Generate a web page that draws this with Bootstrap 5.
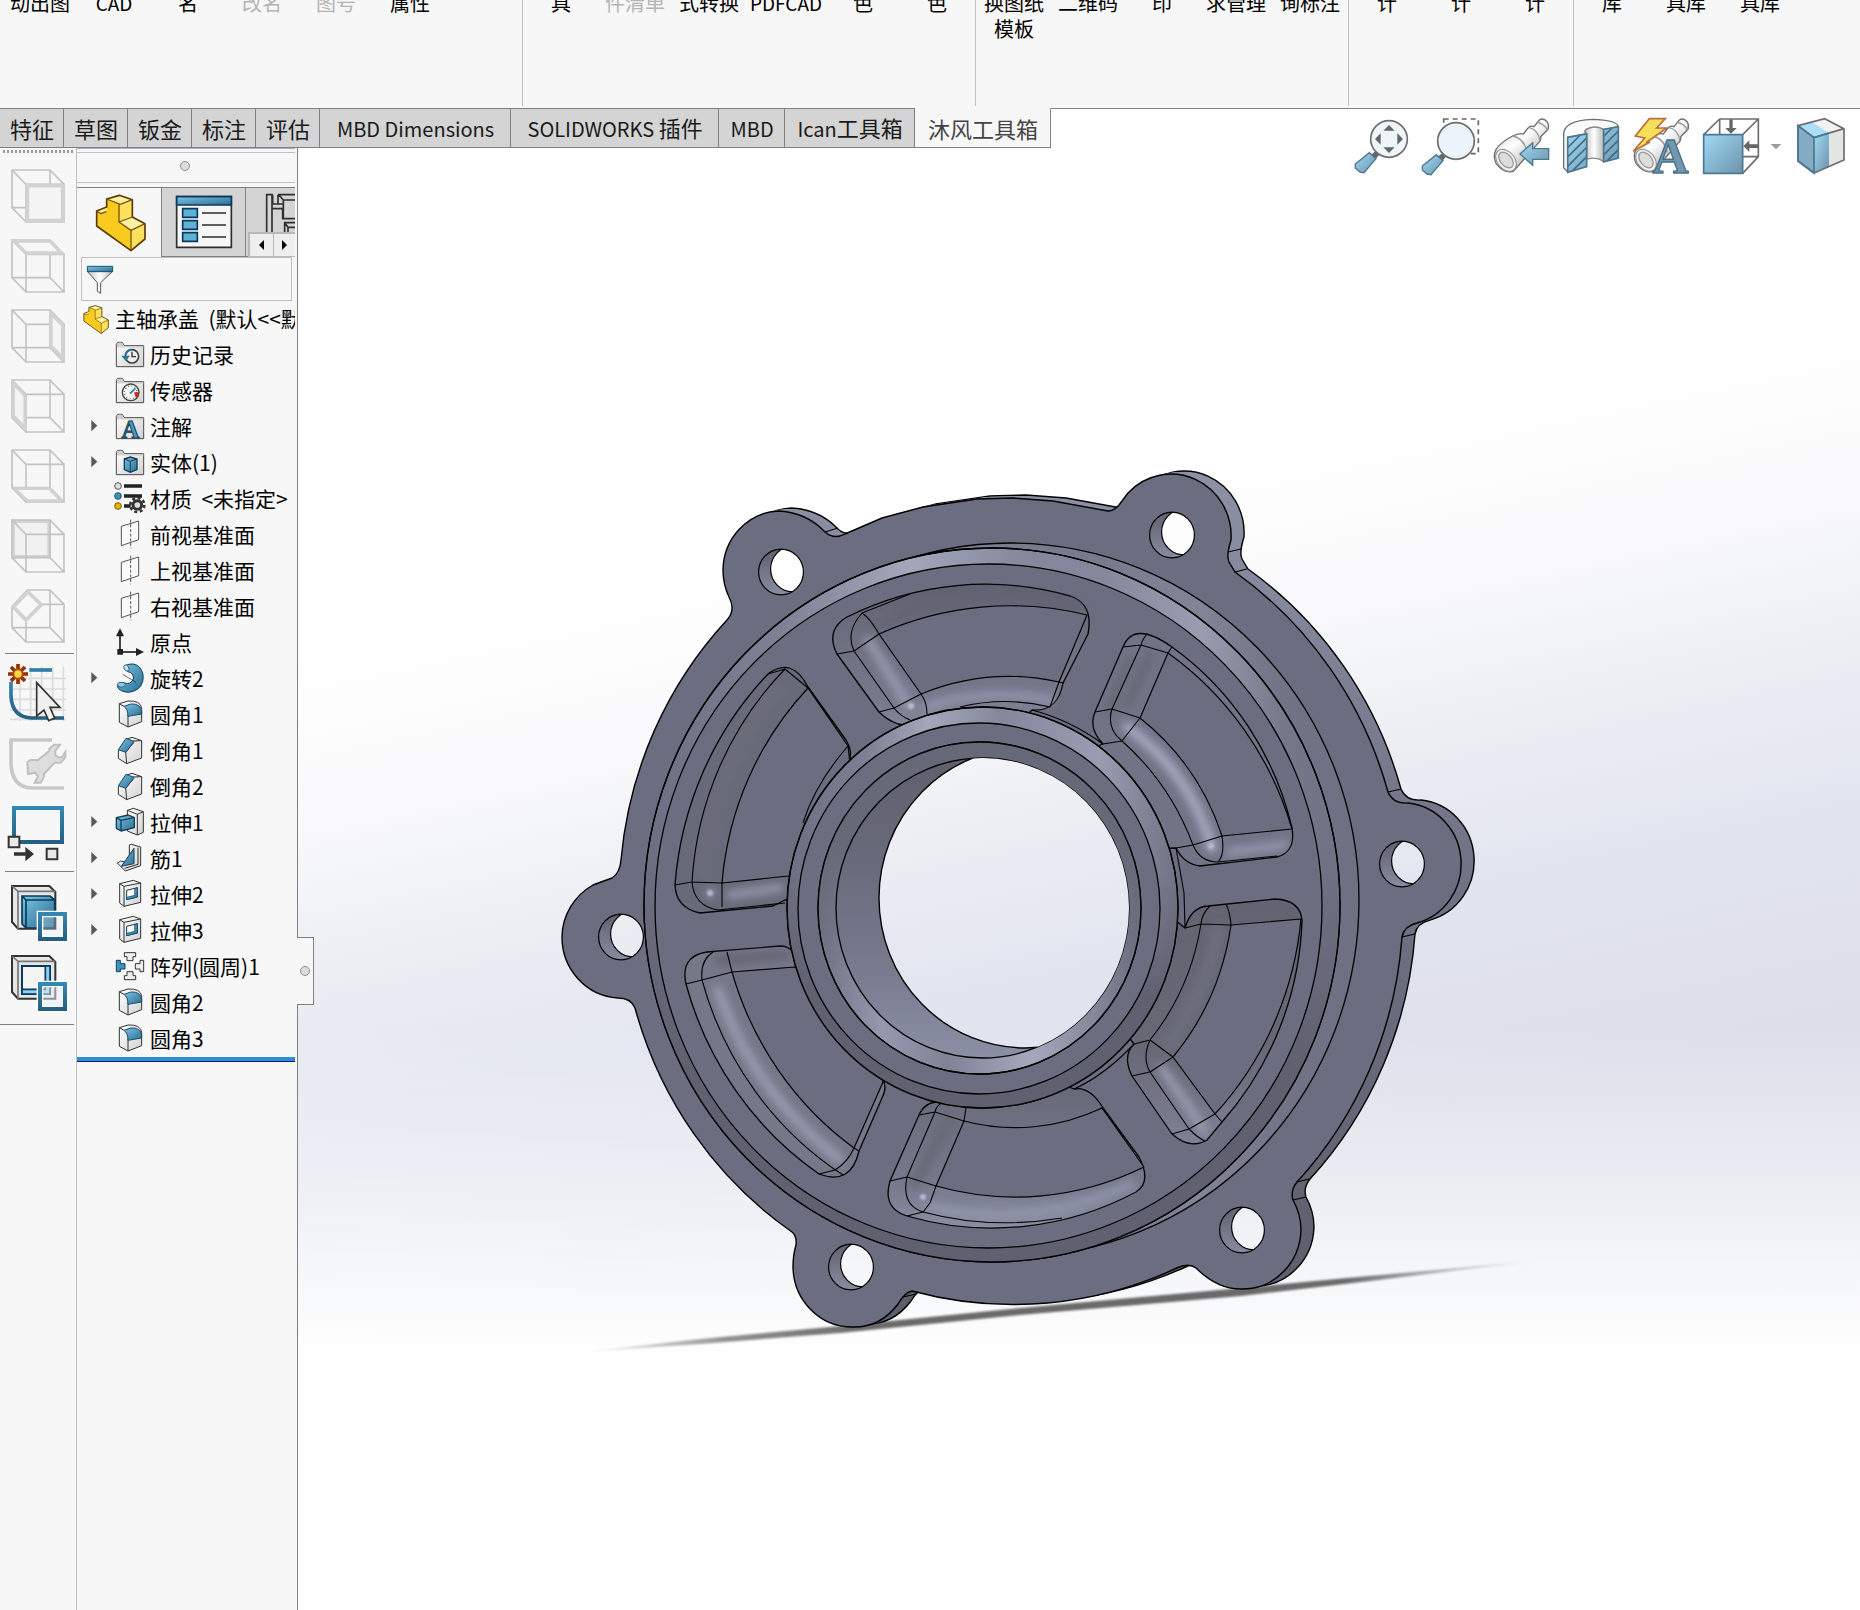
<!DOCTYPE html>
<html lang="zh-CN">
<head>
<meta charset="utf-8">
<meta name="viewport" content="width=device-width, initial-scale=1">
<title>SOLIDWORKS - 主轴承盖</title>
<link rel="stylesheet" href="https://cdn.jsdelivr.net/npm/bootstrap@5.3.0/dist/css/bootstrap.min.css">
<style>
  :root { --panel: #f7f7f7; --edge: #808080; --soft: #c0c0c0; --tab: #d4d4d4; }
  body { font-family: "Noto Sans CJK SC", sans-serif; color: #000; background: #fff; }
  button { font: inherit; color: inherit; background: none; border: 0; padding: 0; }
  svg { display: block; flex: none; }

  .ribbon { height: 108px; background: var(--panel); font-size: 20px; line-height: 26px; overflow: hidden; padding-left: 3px; }
  .cmd { width: 74px; align-self: flex-start; margin-top: -10px; text-align: center; white-space: nowrap; }
  .cmd-wide { width: 80px; }
  .cmd-latin { font-size: 19px; }
  .cmd:disabled { color: #b4b4b4; }
  .rule { width: 1px; height: 106px; margin: 0 1px; background: var(--soft); }
  .spare { width: 75px; }

  .cmtabs { background: #fff; font-size: 22px; line-height: 37px; }
  .cmtab { height: 40px; padding: 0 9px 0 10px; background: var(--tab); border: solid var(--edge); border-width: 1px 1px 1px 0; color: #1a1a1a; white-space: nowrap; }
  .cmtab span { font-size: 20px; }
  .cmtab-xl { width: 191px; } .cmtab-xxl { width: 208px; } .cmtab-m { width: 66px; } .cmtab-l { width: 130px; } .cmtab-on { width: 136px; }
  .cmtab-on { background: var(--panel); border-top-color: var(--panel); color: #444; }
  .cmline { border-top: 1px solid var(--edge); }

  .viewbar { width: 77px; background: var(--panel); border-right: 1px solid var(--soft); }
  .grip { height: 13px; padding: 2px 2px 0 3px; }
  .grip i { display: block; height: 3px; background: repeating-linear-gradient(90deg, #9a9a9a 0 2px, transparent 2px 4px); }
  .vb { display: block; height: 70px; width: 76px; }
  .split { border-top: 1px solid var(--edge); margin: 2px 2px 4px 5px; }
  .split-b { margin: 3px 2px 6px 5px; }
  .split-c { margin: 6px 2px 0 0; }

  .tree-pane { width: 221px; background: var(--panel); border-right: 1px solid var(--edge); position: relative; padding-right: 2px; }
  .pane-top { height: 39px; border-top: 1px solid #9db8c0; }
  .pane-grip { height: 31px; margin-top: 3px; border: solid var(--soft); border-width: 1px 0; padding: 0 3px 3px 0; }
  .dot { width: 10px; height: 10px; border-radius: 50%; background: #ddd; border: 1px solid #8c8c8c; }
  .ptabs { height: 70px; border-top: 1px solid var(--edge); overflow: hidden; position: relative; }
  .ptab { height: 69px; border-right: 1px solid var(--edge); flex: none; }
  .ptab-off { background: var(--tab); border-bottom: 1px solid var(--edge); }
  .pscroll { right: 0; bottom: 0; background: #eee; border: solid #b8b8b8; border-width: 2px 0 1px 2px; }
  .pscroll button { width: 23px; height: 22px; }
  .pscroll button + button { border-left: 1px solid #b8b8b8; width: 22px; }
  .find { height: 44px; margin: 0 3px 0 4px; border: 1px solid var(--soft); }
  .find input { min-width: 0; flex: 1; border: 0; background: none; font-size: 20px; outline: 0; }
  .tree { font-size: 21px; line-height: 36px; white-space: nowrap; overflow: hidden; margin: 0; }
  .tree li { height: 36px; display: flex; }
  .tree span { margin-top: -1px; }
  .root-node { padding-left: 5px; }
  .root-node span { margin-left: 5px; }
  .leaf { padding-left: 37px; }
  .leaf.has-kids { padding-left: 7px; }
  .leaf span { margin-left: 4px; }
  .twist { width: 30px; height: 36px; flex: none; }
  .rollback { height: 5px; background: #2f8fcb; border-bottom: 1px solid #15158a; }
  .collapse-tab { left: 220px; top: 789px; width: 17px; height: 68px; background: var(--panel); border: 1px solid var(--edge); border-left: 0; }

  .scene { background: linear-gradient(to bottom, rgba(255,255,255,0) 60%, rgba(255,255,255,.4) 70%, #fefefe 82%), linear-gradient(168deg, #fff 28%, #f9f9fb 38%, #eceef3 46%, #e2e6f0 54%, #dcdfea 67%); }
  .scene > svg { position: absolute; inset: 0; width: 100%; height: 100%; }
  .hud { right: 4px; top: 112px; z-index: 3; }
</style>
</head>
<body>
<!-- shared icon parts -->
<svg width="0" height="0" class="position-absolute" aria-hidden="true">
  <defs>
    <linearGradient id="bl" x1="0" y1="0" x2="1" y2="1"><stop offset="0" stop-color="#9fdaf5"/><stop offset="1" stop-color="#6d93aa"/></linearGradient>
    <linearGradient id="bd" x1="0" y1="0" x2="1" y2="1"><stop offset="0" stop-color="#7cc4e4"/><stop offset="1" stop-color="#2a6c90"/></linearGradient>
    <linearGradient id="st" x1="0" y1="0" x2="0" y2="1"><stop offset="0" stop-color="#3388b2"/><stop offset="1" stop-color="#265f80"/></linearGradient>
    <linearGradient id="wh" x1="0" y1="0" x2="1" y2="1"><stop offset="0" stop-color="#fff"/><stop offset="1" stop-color="#d2d2d2"/></linearGradient>
    <linearGradient id="tube" gradientUnits="userSpaceOnUse" x1="520" y1="400" x2="570" y2="460"><stop offset="0" stop-color="#ececec"/><stop offset=".35" stop-color="#fff"/><stop offset="1" stop-color="#cfcfcf"/></linearGradient>
    <linearGradient id="gy" x1="0" y1="0" x2="1" y2="0"><stop offset="0" stop-color="#c4c4c4"/><stop offset=".5" stop-color="#fff"/><stop offset="1" stop-color="#b8b8b8"/></linearGradient>
    <clipPath id="hatch"><path d="M683 412l57-10v98l-57 17zM791 388l44-8v94l-44 12z"/></clipPath>
    <g id="wire" fill="none" stroke="#c3c3c3" stroke-width="5">
      <path d="M36 90H150V203H36zM78 133H192V246H78zM36 90l42 43M150 90l42 43M36 203l42 43M150 203l42 43"/>
    </g>
    <g id="folder"><path d="M7 89V22l4-6h14l6 10h58v63z" fill="url(#wh)" stroke="#4a4a4a" stroke-width="3"/><path d="M9 31V22l4-5h11l6 11h58v4z" fill="#cfcfcf"/></g>
    <g id="plane" fill="none" stroke="#333" stroke-width="2.5"><path d="M22 28L74 12V68L22 86z" fill="#fafafa"/><path d="M50 8V94" stroke-dasharray="9 5"/></g>
    <g id="fillet" stroke="#333" stroke-width="3" stroke-linejoin="round"><path d="M16 20l26-8q38-2 41 22v40L42 90 16 76z" fill="url(#wh)"/><path d="M42 52V90M16 20l14 8" fill="none"/><path d="M30 28l20-7q30-2 33 22v8L42 58q0-22-12-30z" fill="url(#bd)" stroke="#174f6c"/></g>
    <g id="chamfer" stroke="#333" stroke-width="3" stroke-linejoin="round"><path d="M13 54L38 18l16-5 29 10v52L38 92 13 76z" fill="url(#wh)"/><path d="M35 57L38 92M35 57L60 28M58 24l25-1" fill="none"/><path d="M13 50L36 16l24 9L36 58z" fill="url(#bd)" stroke="#174f6c"/></g>
    <g id="cut" stroke="#333" stroke-width="3" stroke-linejoin="round"><path d="M17 20L58 10l22 8v58L30 88 17 78z" fill="url(#wh)"/><path d="M30 28L80 18M30 28V88M17 20l13 8" fill="none"/><path d="M38 40l32-8v28l-32 8z" fill="#fff" stroke="#0b3e5c"/><path d="M62 35l8-3v28l-32 8v-7l24-6z" fill="url(#bd)" stroke="#0b3e5c" stroke-width="2"/></g>
    <g id="brick" stroke-linejoin="round" stroke-width="4"><path d="M290 210l30-12v-24l38-11 39 13v52l38 20v46l-42 35-103-74z" fill="#f9cb1f"/><path d="M290 210l30-10v12l-18 8zM320 174l38-11 39 13-36 14zM357 243l36-16 42 21-42 20z" fill="#fdf0a0"/><path d="M361 190l36-14v52l-40 15zM393 268l42-20v46l-42 35z" fill="#fbe25c"/><path d="M290 210l30-12v-24l38-11 39 13v52l38 20v46l-42 35-103-74z" fill="none" stroke="#5b3905" stroke-width="5"/><path d="M361 190l-41-16M361 190l36-14M357 190v53l36 25 42-20M393 268v60M357 243l40-15M290 210l12 8 18-6" fill="none" stroke="#7a5310"/></g>
    <g id="tri"><path d="M22 45l18 17-18 17z" fill="#595959"/></g>
    <g id="binoc" stroke="#6e6e6e" stroke-width="4"><path d="M468 449Q480 428 518 408 540 398 550 402L566 382Q576 376 582 380L598 360Q610 352 622 366 628 376 624 388L602 410Q604 422 596 428L566 462 520 514Q492 522 468 490 458 468 468 449z" fill="url(#tube)"/><path d="M518 408q36 8 44 50M566 382q28 6 34 40M590 366q24 6 32 24" fill="none" stroke="#999"/><ellipse cx="498" cy="481" rx="26" ry="37" transform="rotate(-40 498 481)" fill="#f2f2f2" stroke="#888" stroke-width="3"/><ellipse cx="498" cy="480" rx="17" ry="27" transform="rotate(-40 498 480)" fill="#dcdcdc" stroke="#999"/></g>
  </defs>
</svg>

<div class="d-flex flex-column min-vh-100 position-relative overflow-hidden">
  <header class="ribbon d-flex">
    <button class="cmd">动出图</button><button class="cmd cmd-latin">CAD</button><button class="cmd">名</button><button class="cmd" disabled>改名</button><button class="cmd" disabled>图号</button><button class="cmd">属性</button><div class="spare"></div>
    <div class="rule ms-0"></div>
    <button class="cmd">具</button><button class="cmd" disabled>件清单</button><button class="cmd">式转换</button><button class="cmd cmd-wide cmd-latin">PDFCAD</button><button class="cmd">色</button><button class="cmd">色</button>
    <div class="rule"></div>
    <button class="cmd">换图纸<br>模板</button><button class="cmd">二维码</button><button class="cmd">印</button><button class="cmd">求管理</button><button class="cmd">询标注</button>
    <div class="rule"></div>
    <button class="cmd">计</button><button class="cmd">计</button><button class="cmd">计</button>
    <div class="rule"></div>
    <button class="cmd">库</button><button class="cmd">具库</button><button class="cmd">具库</button>
  </header>

  <nav class="cmtabs d-flex">
    <button class="cmtab">特征</button><button class="cmtab">草图</button><button class="cmtab">钣金</button><button class="cmtab">标注</button><button class="cmtab">评估</button><button class="cmtab cmtab-xl"><span>MBD Dimensions</span></button><button class="cmtab cmtab-xxl"><span>SOLIDWORKS </span>插件</button><button class="cmtab cmtab-m"><span>MBD</span></button><button class="cmtab cmtab-l"><span>Ican</span>工具箱</button><button class="cmtab cmtab-on">沐风工具箱</button>
    <div class="cmline flex-grow-1"></div>
  </nav>

  <div class="hud d-flex align-items-center position-absolute">
    <button aria-label="整屏显示全图"><svg width="70" height="70" viewBox="18 336 210 210"><path d="M92 466l18-16 12 10-18 20z" fill="#666"/><path d="M46 492l42-34 20 18-36 42-12-2-14-12z" fill="url(#bl)" stroke="#4d7790" stroke-width="4"/><circle cx="147" cy="417" r="55" fill="#eef6fa" stroke="#6e6e6e" stroke-width="5"/><path d="M147 375l17 17h-34zM147 459l17-17h-34zM105 417l17-17v34zM189 417l-17-17v34z" fill="#666"/></svg></button>
    <button aria-label="局部放大"><svg width="70" height="70" viewBox="228 336 210 210"><path d="M311 357H415V461H311z" fill="none" stroke="#666" stroke-width="5" stroke-dasharray="15 12"/><path d="M292 472l18-16 12 10-18 20z" fill="#666"/><path d="M247 498l42-34 20 18-36 42-12-2-14-12z" fill="url(#bl)" stroke="#4d7790" stroke-width="4"/><circle cx="348" cy="423" r="55" fill="#eaf4fa" stroke="#6e6e6e" stroke-width="5"/></svg></button>
    <button aria-label="上一视图"><svg width="70" height="70" viewBox="438 336 210 210"><use href="#binoc"/><path d="M540 462l38-34v18h48v32h-48v18z" fill="url(#bl)" stroke="#4d7790" stroke-width="4"/></svg></button>
    <button aria-label="剖面视图"><svg width="70" height="70" viewBox="648 336 210 210"><path d="M683 515l-12-12V402q0-40 86-44 74 2 78 22l-44 10-4-2q-22-12-48 0l-5 14-51 10z" fill="#fafafa" stroke="#6e6e6e" stroke-width="4"/><path d="M734 392q26-20 57-4v96q-24-16-51-6V402z" fill="url(#gy)" stroke="#888" stroke-width="4"/><path d="M683 412l57-10v98l-57 17zM791 388l44-8v94l-44 12z" fill="url(#bl)"/><g clip-path="url(#hatch)" stroke="#3f6d88" stroke-width="5"><path d="M680 446l44-44M680 474l64-64M680 502l64-64M692 518l52-52M786 414l34-34M786 442l54-54M786 470l54-54M796 488l44-44"/></g><path d="M683 412l57-10v98l-57 17zM791 388l44-8v94l-44 12z" fill="none" stroke="#4d7790" stroke-width="5"/></svg></button>
    <button aria-label="动态注解视图"><svg width="70" height="70" viewBox="858 336 210 210"><use href="#binoc" x="420"/><path d="M928 356h48l-26 28h30l-62 44 12-2-50 28 34-40-28-6z" fill="#f8df5a" stroke="#b96f3f" stroke-width="5"/><text x="992" y="519" text-anchor="middle" font-family="Liberation Serif, serif" font-weight="700" font-size="150" fill="#7398ae" stroke="#456f8a" stroke-width="4">A</text></svg></button>
    <button aria-label="视图定向"><svg width="70" height="70" viewBox="1068 336 210 210"><path d="M1091 404l48-47h116v113l-47 50M1208 404l47-47M1139 357v47M1208 470h47" fill="none" stroke="#6e6e6e" stroke-width="5"/><path d="M1091 404H1208V520H1091z" fill="url(#bl)" stroke="#4d7790" stroke-width="5"/><path d="M1168 358h10v26h12l-17 17-17-17h12zM1256 433v11h-28v12l-18-18 18-17v12z" fill="#666"/></svg></button>
    <button aria-label="更多视图"><svg width="20" height="70" viewBox="1278 336 60 210"><path d="M1292 432h32l-16 16z" fill="#9c9c9c"/></svg></button>
    <button aria-label="显示样式"><svg width="70" height="70" viewBox="1338 336 210 210"><path d="M1374 377l80-21 58 30-90 27z" fill="#f2f2f2"/><path d="M1374 377l42-10 52 33-46 13z" fill="#a9e0f8"/><path d="M1374 377l48 36v106l-48-36z" fill="#86abc4"/><path d="M1422 413l90-27v94l-90 39z" fill="#e4e6e6"/><path d="M1422 413l45-14v101l-45 19z" fill="url(#bl)"/><path d="M1374 377l80-21 58 30v94l-90 39-48-36zM1374 377l48 36 90-27" fill="none" stroke="#6e6e6e" stroke-width="5"/><path d="M1422 519l-48-36V377l48 36zl0-106 45-14" fill="none" stroke="#4d7790" stroke-width="5"/></svg></button>
  </div>

  <main class="d-flex flex-grow-1">
    <aside class="viewbar flex-shrink-0">
      <div class="grip"><i></i></div>
      <button class="vb" aria-label="前视"><svg width="76" height="70" viewBox="0 63 228 210"><use href="#wire"/><path d="M82 137H188V242H82z" fill="#f4f4f4" stroke="#d2d2d2" stroke-width="11"/></svg></button>
      <button class="vb" aria-label="上视"><svg width="76" height="70" viewBox="0 63 228 210"><use href="#wire"/><path d="M42 93H150l34 36H78z" fill="#f7f7f7" stroke="#d2d2d2" stroke-width="10"/></svg></button>
      <button class="vb" aria-label="右视"><svg width="76" height="70" viewBox="0 63 228 210"><use href="#wire"/><path d="M153 100l35 36v98l-35-36z" fill="#f4f4f4" stroke="#d2d2d2" stroke-width="10"/></svg></button>
      <button class="vb" aria-label="左视"><svg width="76" height="70" viewBox="0 63 228 210"><use href="#wire"/><path d="M40 100l35 36v98l-35-36z" fill="#f4f4f4" stroke="#d2d2d2" stroke-width="10"/></svg></button>
      <button class="vb" aria-label="下视"><svg width="76" height="70" viewBox="0 63 228 210"><use href="#wire"/><path d="M46 206H148l34 36H82z" fill="#f7f7f7" stroke="#d2d2d2" stroke-width="8"/></svg></button>
      <button class="vb" aria-label="后视"><svg width="76" height="70" viewBox="0 63 228 210"><path d="M40 94H147V200H40z" fill="#f1f1f1" stroke="#d2d2d2" stroke-width="10"/><use href="#wire"/></svg></button>
      <button class="vb" aria-label="等轴测"><svg width="76" height="70" viewBox="0 63 228 210"><path d="M36 140L82 90h68l42 43V246H78l-42-43zM150 90V203l42 43M36 203H150M78 246V185M128 133h64" fill="none" stroke="#c3c3c3" stroke-width="5"/><path d="M84 96l40 38-46 46-38-40z" fill="#f8f8f8" stroke="#d2d2d2" stroke-width="11"/></svg></button>
      <div class="split"></div>
      <button class="vb" aria-label="草图绘制"><svg width="76" height="70" viewBox="0 594 228 210"><path d="M60 620V784M92 620V784M125 620V784M158 620V784M190 620V784M30 655H198M30 687H198M30 718H198M30 750H198M30 778H198" stroke="#dcdcdc" stroke-width="5"/><path d="M33 665v45q4 62 62 64h97" fill="none" stroke="url(#st)" stroke-width="11"/><path d="M88 630h68" stroke="#2f7fa6" stroke-width="11"/><path d="M54 612V672M24 642H84M33 621L75 663M75 621L33 663" stroke="#962f04" stroke-width="11"/><circle cx="54" cy="642" r="14" fill="#ffd83b" stroke="#b04a10" stroke-width="6"/><path d="M110 668v100l22-18 14 32 18-8-14-32h30z" fill="#f0f0f0" stroke="#333" stroke-width="5"/></svg></button>
      <button class="vb" aria-label="修复草图"><svg width="76" height="70" viewBox="0 804 228 210"><path d="M156 840H33v74q4 68 62 70h97" fill="none" stroke="#c8c8c8" stroke-width="11"/><path d="M82 906L92 900H114L148 872V866L162 854H180L166 872V886L174 892H186L196 876V892L182 908H164L132 942V950L122 968H104L114 950 106 938 84 942z" fill="#ddd" stroke="#c0c0c0" stroke-width="6"/></svg></button>
      <button class="vb" aria-label="移动实体"><svg width="76" height="70" viewBox="0 54 228 210"><path d="M42 84H186V186H42z" fill="none" stroke="url(#st)" stroke-width="12"/><path d="M26 170h32v32H26zM140 206h32v32h-32z" fill="#e8e8e8" stroke="#333" stroke-width="6"/><path d="M42 217h34v-16l26 21-26 22v-17H42z" fill="#333"/></svg></button>
      <div class="split split-b"></div>
      <button class="vb" aria-label="凸台"><svg width="76" height="70" viewBox="0 294 228 210"><path d="M36 318H148l18 18V446H54l-18-20z" fill="#e6e6e6" stroke="#333" stroke-width="6"/><path d="M36 318l18 16v112M54 334h112" fill="none" stroke="#777" stroke-width="5"/><path d="M66 348h84l14 12v84H78l-12-12z" fill="url(#bd)" stroke="#073a5c" stroke-width="5"/><path d="M66 348l12 12h86M78 360v84" fill="none" stroke="#073a5c" stroke-width="5"/><path d="M120 402h75v75h-75z" fill="none" stroke="#fff" stroke-width="20"/><path d="M120 402h75v75h-75z" fill="#e8f0f4" fill-opacity=".3" stroke="url(#st)" stroke-width="12"/></svg></button>
      <button class="vb" aria-label="切除"><svg width="76" height="70" viewBox="0 504 228 210"><path d="M36 528H148l18 18V656H54l-18-20z" fill="#e6e6e6" stroke="#333" stroke-width="6"/><path d="M36 528l18 16v112M54 544h112" fill="none" stroke="#777" stroke-width="5"/><path d="M66 558h84v84H66z" fill="#f4f4f4" stroke="#073a5c" stroke-width="6"/><path d="M136 558h14v84H66v-14h70z" fill="#8fd0f0" stroke="#073a5c" stroke-width="5"/><path d="M120 612h75v75h-75z" fill="none" stroke="#fff" stroke-width="20"/><path d="M120 612h75v75h-75z" fill="#e8f0f4" fill-opacity=".5" stroke="url(#st)" stroke-width="12"/></svg></button>
      <div class="split split-c"></div>
    </aside>

    <aside class="tree-pane flex-shrink-0">
      <div class="pane-top overflow-hidden"><div class="pane-grip d-flex align-items-center justify-content-center"><div class="dot"></div></div></div>
      <div class="ptabs d-flex">
        <button class="ptab" aria-label="特征管理"><svg width="84" height="68" viewBox="231 144 252 204"><use href="#brick"/></svg></button>
        <button class="ptab ptab-off" aria-label="属性管理"><svg width="83" height="68" viewBox="486 144 249 204"><path d="M530 170H694V322H530z" fill="#f6f6f6" stroke="#2e2e2e" stroke-width="5"/><path d="M530 170H694V195H530z" fill="url(#bd)" stroke="#073a5c" stroke-width="5"/><g fill="#5fb2d6" stroke="#073a5c" stroke-width="5"><path d="M548 206h44v26h-44zM548 242h44v26h-44zM548 278h44v26h-44z"/></g><path d="M606 219h72M606 255h72M606 291h72" stroke="#2e2e2e" stroke-width="5"/></svg></button>
        <button class="ptab ptab-off" aria-label="配置管理"><svg width="60" height="68" viewBox="738 144 180 204"><g fill="none" stroke="#2e2e2e" stroke-width="5"><path d="M800 280V164h16v116M818 192h16M818 206h16M834 164h60M818 164v28M834 164v28l14 0M834 206h14v30h50M850 180h48M836 164l14 16v56M854 280v-32h40M864 280v-18h30M854 248l10 14"/></g></svg></button>
        <div class="pscroll d-flex position-absolute"><button aria-label="向左"><svg width="23" height="22" viewBox="0 0 23 22"><path d="M14 6v10l-5-5z"/></svg></button><button aria-label="向右"><svg width="21" height="22" viewBox="0 0 21 22"><path d="M8 6v10l5-5z"/></svg></button></div>
      </div>
      <div class="find d-flex">
        <label for="treeFilter"><svg width="36" height="42" viewBox="246 354 108 126"><path d="M262 394l30 34v26l10 6v-32l36-34z" fill="url(#gy)" stroke="#555" stroke-width="3"/><path d="M262 379H338V395H262z" fill="url(#bd)" stroke="#19526f" stroke-width="3"/></svg></label>
        <input id="treeFilter" type="text" aria-label="过滤">
      </div>
      <ul class="tree list-unstyled">
        <li class="root-node"><svg width="28" height="36" viewBox="279 136 166 213"><use href="#brick"/></svg><span>主轴承盖&nbsp; (默认&lt;&lt;默认&gt;_显示状态 1&gt;)</span></li>
        <li class="leaf"><svg width="32" height="36" viewBox="0 0 96 108"><use href="#folder"/><circle cx="54" cy="58" r="20" fill="#eee" stroke="#444" stroke-width="5"/><path d="M54 44v15h12" fill="none" stroke="#333" stroke-width="4"/><path d="M22 56h26L35 72z" fill="#2a7599"/><path d="M34 54q4-16 18-16" fill="none" stroke="#2a7599" stroke-width="6"/></svg><span>历史记录</span></li>
        <li class="leaf"><svg width="32" height="36" viewBox="0 0 96 108"><use href="#folder"/><circle cx="50" cy="58" r="25" fill="#f6f6f6" stroke="#444" stroke-width="4"/><circle cx="50" cy="58" r="19" fill="none" stroke="#333" stroke-width="4" stroke-dasharray="2 8"/><path d="M48 62l16-16" stroke="#2f82a8" stroke-width="6"/><path d="M60 58h14q0 12-8 18z" fill="#d3270f"/></svg><span>传感器</span></li>
        <li class="leaf has-kids"><button class="twist" aria-label="展开"><svg width="25" height="36" viewBox="0 0 75 108"><use href="#tri" y="-12"/></svg></button><svg width="32" height="36" viewBox="0 0 96 108"><use href="#folder"/><text x="49" y="87" text-anchor="middle" font-family="Liberation Serif, serif" font-weight="700" font-size="74" fill="#4b9cc2" stroke="#123f58" stroke-width="3">A</text></svg><span>注解</span></li>
        <li class="leaf has-kids"><button class="twist" aria-label="展开"><svg width="25" height="36" viewBox="0 0 75 108"><use href="#tri" y="-12"/></svg></button><svg width="32" height="36" viewBox="0 0 96 108"><use href="#folder"/><path d="M31 42l18-6 20 6v32l-20 8-18-8z" fill="url(#bd)" stroke="#123f58" stroke-width="4"/><path d="M31 42l18 7 20-7M49 49v32" fill="none" stroke="#123f58" stroke-width="3"/></svg><span>实体(1)</span></li>
        <li class="leaf"><svg width="32" height="36" viewBox="0 0 96 108"><circle cx="12" cy="15" r="10" fill="#ddd" stroke="#555" stroke-width="3"/><circle cx="12" cy="45" r="10" fill="#3f92bb" stroke="#1d516c" stroke-width="3"/><circle cx="12" cy="75" r="10" fill="#e2b515" stroke="#7c5b00" stroke-width="3"/><path d="M30 15h54M30 45h54M30 75h20" stroke="#222" stroke-width="11"/><circle cx="70" cy="72" r="21" fill="none" stroke="#333" stroke-width="8" stroke-dasharray="9 7.5"/><circle cx="70" cy="72" r="13" fill="#ddd" stroke="#333" stroke-width="9"/></svg><span>材质&nbsp; &lt;未指定&gt;</span></li>
        <li class="leaf"><svg width="32" height="36" viewBox="0 0 96 108"><use href="#plane"/></svg><span>前视基准面</span></li>
        <li class="leaf"><svg width="32" height="36" viewBox="0 0 96 108"><use href="#plane"/></svg><span>上视基准面</span></li>
        <li class="leaf"><svg width="32" height="36" viewBox="0 0 96 108"><use href="#plane"/></svg><span>右视基准面</span></li>
        <li class="leaf"><svg width="32" height="36" viewBox="0 0 96 108"><path d="M18 30V81H70" fill="none" stroke="#444" stroke-width="6"/><path d="M18 10l12 24H6zM90 81L66 69v24zM10 72h17v17H10z" fill="#222"/></svg><span>原点</span></li>
        <li class="leaf has-kids"><button class="twist" aria-label="展开"><svg width="25" height="36" viewBox="0 0 75 108"><use href="#tri" y="-12"/></svg></button><svg width="32" height="36" viewBox="0 0 96 108"><path d="M32 14Q60 2 76 18 92 36 86 62 78 90 44 94 12 92 10 74 16 60 32 66 50 72 58 54 60 36 42 32 28 26 32 14z" fill="url(#bd)" stroke="#123f58" stroke-width="3"/><ellipse cx="37" cy="21" rx="7" ry="10" fill="#bfe4f5" stroke="#123f58" stroke-width="2" transform="rotate(-30 37 21)"/><ellipse cx="22" cy="71" rx="12" ry="7" fill="#8ccbe8" stroke="#123f58" stroke-width="2"/><path d="M26 40l40 24" stroke="#222" stroke-width="2"/></svg><span>旋转2</span></li>
        <li class="leaf"><svg width="32" height="36" viewBox="0 0 96 108"><use href="#fillet"/></svg><span>圆角1</span></li>
        <li class="leaf"><svg width="32" height="36" viewBox="0 0 96 108"><use href="#chamfer"/></svg><span>倒角1</span></li>
        <li class="leaf"><svg width="32" height="36" viewBox="0 0 96 108"><use href="#chamfer"/></svg><span>倒角2</span></li>
        <li class="leaf has-kids"><button class="twist" aria-label="展开"><svg width="25" height="36" viewBox="0 0 75 108"><use href="#tri" y="-12"/></svg></button><svg width="32" height="36" viewBox="0 0 96 108"><g stroke="#333" stroke-width="3" stroke-linejoin="round"><path d="M40 16l18-6 30 10v62l-18 8-30-12z" fill="url(#wh)"/><path d="M40 16l30 12v62M70 28l18-8" fill="none"/></g><g stroke="#123f58" stroke-width="4" stroke-linejoin="round"><path d="M7 38l36-8 18 8v30l-40 10-14-8z" fill="url(#bd)"/><path d="M7 38l14 8 40-8M21 46v32" fill="none"/></g></svg><span>拉伸1</span></li>
        <li class="leaf has-kids"><button class="twist" aria-label="展开"><svg width="25" height="36" viewBox="0 0 75 108"><use href="#tri" y="-12"/></svg></button><svg width="32" height="36" viewBox="0 0 96 108"><g stroke="#333" stroke-width="3" stroke-linejoin="round"><path d="M46 12l6-2 28 8v56L34 90 10 66l10-6 26 6z" fill="url(#wh)"/><path d="M72 20v50L32 82" fill="none"/></g><path d="M60 22v46l-38 8z" fill="url(#bd)" stroke="#123f58" stroke-width="3"/></svg><span>筋1</span></li>
        <li class="leaf has-kids"><button class="twist" aria-label="展开"><svg width="25" height="36" viewBox="0 0 75 108"><use href="#tri" y="-12"/></svg></button><svg width="32" height="36" viewBox="0 0 96 108"><use href="#cut"/></svg><span>拉伸2</span></li>
        <li class="leaf has-kids"><button class="twist" aria-label="展开"><svg width="25" height="36" viewBox="0 0 75 108"><use href="#tri" y="-12"/></svg></button><svg width="32" height="36" viewBox="0 0 96 108"><use href="#cut"/></svg><span>拉伸3</span></li>
        <li class="leaf"><svg width="32" height="36" viewBox="0 0 96 108"><g fill="#eee" stroke="#333" stroke-width="3"><path d="M31 11h34v12h-8v12H39V23h-8zM31 92h34V80h-8V68H39v12h-8zM89 34v34H78v-8H64V44h14V34z"/><path d="M7 34v34h12v-8h14V44H19V34z" fill="#3f92bb" stroke="#123f58"/></g></svg><span>阵列(圆周)1</span></li>
        <li class="leaf"><svg width="32" height="36" viewBox="0 0 96 108"><use href="#fillet"/></svg><span>圆角2</span></li>
        <li class="leaf"><svg width="32" height="36" viewBox="0 0 96 108"><use href="#fillet"/></svg><span>圆角3</span></li>
      </ul>
      <div class="rollback"></div>
      <button class="collapse-tab position-absolute d-flex align-items-center justify-content-center z-1" aria-label="收起面板"><span class="dot d-block"></span></button>
    </aside>

    <section class="scene flex-grow-1 position-relative overflow-hidden">
      <svg viewBox="298 148 1562 1462" preserveAspectRatio="xMidYMid slice" role="img" aria-label="主轴承盖三维模型">
        <defs>
          <linearGradient id="side" gradientUnits="userSpaceOnUse" x1="0" y1="470" x2="0" y2="1330"><stop offset="0" stop-color="#8e92a6"/><stop offset=".35" stop-color="#767a8c"/><stop offset=".6" stop-color="#6a6d7e"/><stop offset="1" stop-color="#5b5d6a"/></linearGradient>
          <linearGradient id="rim" gradientUnits="userSpaceOnUse" x1="644" y1="0" x2="1340" y2="0"><stop offset="0" stop-color="#6c6f82"/><stop offset=".2" stop-color="#7f8296"/><stop offset=".38" stop-color="#a4a7bb"/><stop offset=".55" stop-color="#84889c"/><stop offset=".66" stop-color="#84889c"/><stop offset=".8" stop-color="#9a9db1"/><stop offset=".92" stop-color="#757889"/><stop offset="1" stop-color="#6f7284"/></linearGradient>
          <linearGradient id="rim2" gradientUnits="userSpaceOnUse" x1="787" y1="0" x2="1178" y2="0"><stop offset="0" stop-color="#6c6f82"/><stop offset=".2" stop-color="#7d8094"/><stop offset=".36" stop-color="#a4a7bb"/><stop offset=".55" stop-color="#84889c"/><stop offset=".8" stop-color="#9a9db1"/><stop offset="1" stop-color="#6f7284"/></linearGradient>
          <linearGradient id="low" x1="0" y1="0" x2="0" y2="1"><stop offset=".42" stop-color="#5f6171" stop-opacity="0"/><stop offset=".72" stop-color="#5f6171"/></linearGradient>
          <linearGradient id="cone" gradientUnits="userSpaceOnUse" x1="818" y1="0" x2="1141" y2="0"><stop offset="0" stop-color="#6f7284"/><stop offset=".2" stop-color="#9699ad"/><stop offset=".4" stop-color="#7f8396"/><stop offset=".66" stop-color="#a5a9bd"/><stop offset="1" stop-color="#6c6f80"/></linearGradient>
          <linearGradient id="high" x1="0" y1="0" x2="0" y2="1"><stop offset=".3" stop-color="#666978"/><stop offset=".7" stop-color="#666978" stop-opacity="0"/></linearGradient>
          <linearGradient id="bore" gradientUnits="userSpaceOnUse" x1="930" y1="770" x2="930" y2="1055"><stop offset="0" stop-color="#5f616f"/><stop offset=".35" stop-color="#696c7c"/><stop offset=".7" stop-color="#787b8e"/><stop offset="1" stop-color="#8b8fa4"/></linearGradient>
          <linearGradient id="hol" x1="0" y1="0" x2="0" y2="1"><stop offset="0" stop-color="#5f616f"/><stop offset="1" stop-color="#888ca0"/></linearGradient>
          <linearGradient id="w1" x1="0" y1="0" x2="0" y2="1"><stop offset="0" stop-color="#5f6170"/><stop offset=".3" stop-color="#6b6e7e"/><stop offset=".75" stop-color="#777a8d"/><stop offset="1" stop-color="#8a8ea3"/></linearGradient>
          <linearGradient id="w3" x1="0" y1="0" x2="0" y2="1"><stop offset="0" stop-color="#626472"/><stop offset=".6" stop-color="#666876"/><stop offset="1" stop-color="#7e8195"/></linearGradient>
          <linearGradient id="shade" x1="0" y1="0" x2="1" y2="0"><stop offset="0" stop-color="#777" stop-opacity="0"/><stop offset=".15" stop-color="#777" stop-opacity=".8"/><stop offset=".3" stop-color="#6a6a6a"/><stop offset=".8" stop-color="#6a6a6a"/><stop offset="1" stop-color="#999" stop-opacity=".1"/></linearGradient>
          <filter id="glow" x="-50%" y="-50%" width="200%" height="200%"><feGaussianBlur stdDeviation="4"/></filter>
          <filter id="fine" x="-20%" y="-200%" width="140%" height="500%"><feGaussianBlur stdDeviation="1"/></filter>
          <path id="body" d="M621 860A393 402 0 0 1 727 620Q736 610 729 597A58 61 0 0 1 723 570 58 60 0 0 1 778 511Q806 512 825 532 834 540 845 534L882 518 923 507 977 499 1013 498 1053 501 1108 511Q1114 511 1119 505L1128 493A60 62 0 0 1 1231 540Q1226 556 1229 562L1235 572A393 402 0 0 1 1388 792Q1393 804 1408 803A59 61 0 0 1 1461 860 59 61 0 0 1 1417 923Q1404 926 1402 937A393 402 0 0 1 1297 1182Q1290 1191 1293 1200A59 61 0 0 1 1301 1230 58 61 0 0 1 1243 1289Q1218 1290 1196 1268 1190 1263 1179 1267A393 402 0 0 1 912 1291Q905 1292 898 1304 880 1328 852 1327A59 61 0 0 1 793 1267Q793 1255 796 1245 797 1236 792 1232A393 402 0 0 1 635 1008Q631 998 618 998A59 61 0 0 1 562 937 62 61 0 0 1 593 885L612 878Q620 873 621 860z"/>
          <clipPath id="mouth"><ellipse cx="982.5" cy="908" rx="146.5" ry="150"/></clipPath>
          <clipPath id="bolt"><ellipse rx="22.4" ry="22.8"/></clipPath>
          <g id="thru"><ellipse cx="12" cy="-3" rx="22.4" ry="22.8" clip-path="url(#bolt)"/></g>
          <g id="boltEdge" fill="none" stroke="#000" stroke-width="1.2"><ellipse rx="22.4" ry="22.8"/><ellipse cx="12" cy="-3" rx="22.4" ry="22.8" clip-path="url(#bolt)"/></g>
          <ellipse id="boltWall" rx="22.4" ry="22.8" fill="url(#hol)"/>
          <mask id="open" maskUnits="userSpaceOnUse" x="298" y="148" width="1562" height="1462">
            <path fill="#fff" d="M298 148H1860V1610H298z"/>
            <ellipse cx="1025.5" cy="898" rx="146.5" ry="150" clip-path="url(#mouth)"/>
            <use href="#thru" x="781" y="572"/><use href="#thru" x="1172" y="535"/><use href="#thru" x="1402" y="864"/><use href="#thru" x="1242" y="1230"/><use href="#thru" x="851" y="1267"/><use href="#thru" x="621" y="937"/>
          </mask>
        </defs>

        <path d="M583 1352L700 1339 840 1326 1020 1308 1241 1288 1379 1275 1535 1261 1379 1280 1241 1296 1020 1315 840 1333 700 1344z" fill="url(#shade)" filter="url(#fine)"/>

        <g mask="url(#open)">
          <use href="#body" x="13" y="-3" fill="url(#side)" stroke="#000" stroke-width="1.4"/>
          <use href="#body" x="8" y="-2" fill="url(#side)"/>
          <use href="#body" x="4" y="-1" fill="url(#side)"/>
          <use href="#body" fill="#6b6e80" stroke="#000" stroke-width="1.4"/>
          <g stroke="#000" stroke-width="1.2" fill="none"><path d="M825 532l13-4M1228 552l13-3M1235 572l12-3M1388 792l13-3M1402 937l13-3M1297 1182l12-3M1293 1200l13-3M903 1297l13-3"/></g>
          <use href="#boltWall" x="781" y="572"/><use href="#boltWall" x="1172" y="535"/><use href="#boltWall" x="1402" y="864"/><use href="#boltWall" x="1242" y="1230"/><use href="#boltWall" x="851" y="1267"/><use href="#boltWall" x="621" y="937"/>

          <g stroke="#000" stroke-width="1.3">
            <ellipse cx="1011" cy="900" rx="348" ry="357" fill="url(#rim)" stroke="none"/>
            <ellipse cx="1011" cy="900" rx="348" ry="357" fill="#6e7183" fill-opacity=".55"/>
            <ellipse cx="992" cy="905" rx="348" ry="357" fill="url(#rim)"/>
            <ellipse cx="992" cy="905" rx="348" ry="357" fill="url(#low)"/>
            <ellipse cx="988.5" cy="906" rx="333.5" ry="342" fill="#6b6e80"/>
          </g>

          <!-- pocket walls -->
          <g stroke="#000" stroke-width="1.3" stroke-linejoin="round">
            <path fill="url(#w1)" d="M879 712L837 654Q825 630 847 617A315 322 0 0 1 1070 596Q1094 604 1088 634L1063 683Q1058 712 1032 710L1000 740 898 724Q887 720 879 712z"/>
            <path fill="#717487" d="M1095 712L1123 647Q1134 620 1172 647A300 310 0 0 1 1292 828Q1296 852 1277 857L1200 866Q1184 864 1176 848L1120 850 1060 760 1103 744Q1088 728 1095 712z"/>
            <path fill="url(#w3)" d="M1185 928Q1191 907 1208 906L1275 899Q1300 900 1302 920A320 320 0 0 1 1222 1122L1207 1140Q1190 1150 1172 1134L1132 1076Q1122 1056 1134 1044L1100 1000 1150 900z"/>
            <path fill="url(#w1)" d="M890 1181L919 1115Q925 1102 938 1102L1000 1060 1074 1089Q1090 1086 1103 1108L1139 1157Q1152 1182 1136 1192A310 315 0 0 1 907 1216Q882 1208 890 1181z"/>
            <path fill="#757889" d="M686 984Q680 956 707 952L780 946Q788 946 792 951L860 980 882 1080Q888 1086 882 1098L859 1151Q851 1186 819 1174A330 340 0 0 1 686 984z"/>
            <path fill="#676a79" d="M675 885A330 340 0 0 1 768 674Q792 656 808 687L846 740Q852 750 850 757L860 900 785 900 773 906 700 913Q676 908 675 885z"/>
          </g>
          <!-- darker fillets and highlights -->
          <g filter="url(#glow)" fill="none" stroke-linecap="round">
            <path d="M880 624L930 604 1000 594 1078 606" stroke="#626473" stroke-width="8"/>
            <path d="M868 640L909 706" stroke="#9b9eb2" stroke-width="8"/>
            <path d="M925 708Q980 688 1050 700" stroke="#9396ac" stroke-width="8"/>
            <path d="M1127 727Q1190 772 1212 848" stroke="#a6a9bf" stroke-width="10"/>
            <path d="M1230 852L1284 845" stroke="#9599af" stroke-width="8"/>
            <path d="M1130 660L1108 712M1150 655L1128 704" stroke="#656773" stroke-width="8"/>
            <path d="M1218 930Q1208 990 1168 1045" stroke="#6c6e7b" stroke-width="14"/>
            <path d="M1162 1068L1204 1130" stroke="#9b9eb2" stroke-width="8"/>
            <path d="M950 1120L915 1182" stroke="#686a77" stroke-width="12"/>
            <path d="M930 1207Q1030 1230 1132 1184" stroke="#9296ac" stroke-width="8"/>
            <path d="M718 990Q752 1090 840 1160" stroke="#9a9db2" stroke-width="9"/>
            <path d="M720 960L785 955" stroke="#636572" stroke-width="10"/>
            <path d="M775 690Q712 770 706 870" stroke="#6b6d79" stroke-width="14"/>
            <path d="M710 893h1M730 895L780 888" stroke="#9699ad" stroke-width="8"/>
          </g>
          <g filter="url(#fine)" fill="#b8bbd0"><circle cx="911" cy="706" r="3"/><circle cx="1211" cy="846" r="3"/><circle cx="923" cy="1197" r="3"/><circle cx="710" cy="893" r="3"/></g>
          <!-- pocket floors and edges -->
          <g stroke="#000" stroke-width="1.2" stroke-linejoin="round" fill="#6b6e80">
            <path d="M879 634A325 330 0 0 1 1087 615L1059 682A235 240 0 0 0 921 694z"/>
            <path d="M1168 653L1140 718A245 250 0 0 1 1222 836L1292 829A320 330 0 0 0 1168 653z"/>
            <path d="M1231 925L1301 919A320 330 0 0 1 1215 1114L1173 1057A245 260 0 0 0 1231 925z"/>
            <path d="M964 1121L936 1186A300 310 0 0 0 1144 1167L1102 1108A210 220 0 0 1 964 1121z"/>
            <path d="M732 972L795 967 860 1000 883 1082 854 1148A320 330 0 0 1 732 972z"/>
            <path d="M808 688A310 320 0 0 0 722 883L788 876 860 850 848 746z"/>
          </g>
          <g stroke="#000" stroke-width="1.1" stroke-linejoin="round" fill="none">
            <path d="M862 613L910 594M862 613Q845 632 854 651L894 708Q900 716 910 720M862 613Q870 618 879 634M837 654L854 651 879 634M879 712L894 708 921 694Q927 702 927 714M1059 682L1050 707M1059 682L1064 683M960 707Q1005 696 1050 707"/>
            <path d="M1147 634Q1142 640 1141 645L1112 709Q1106 728 1122 741A250 260 0 0 1 1193 845Q1200 862 1218 862L1277 856M1123 647L1141 645 1168 653 1172 647M1095 712L1112 709 1140 718 1125 737 1122 741M1103 744L1122 741M1176 848L1193 845 1222 836Q1225 855 1218 862"/>
            <path d="M1210 906Q1202 913 1201 924A220 240 0 0 1 1150 1040Q1142 1058 1150 1072L1189 1129Q1198 1138 1205 1141M1185 928L1201 924 1231 925Q1230 912 1226 904M1134 1044L1150 1040 1173 1057 1150 1072 1132 1076M1215 1114L1189 1129 1172 1134M1215 1114L1222 1122"/>
            <path d="M942 1103Q936 1106 935 1112L907 1177Q901 1205 923 1212 990 1230 1062 1218M919 1115L935 1112 964 1121 966 1108M890 1181L907 1177 936 1186 930 1203 923 1212 907 1216"/>
            <path d="M713 952Q700 960 702 980A330 340 0 0 0 843 1175M686 984L702 980 732 972 727 952M859 1151L854 1148Q848 1162 835 1170L819 1174"/>
            <path d="M785 669A320 330 0 0 0 692 882Q694 906 718 910L785 903M675 885L692 882 722 883 722 907M768 674L785 669 808 688M848 746Q815 784 803 823"/>
            <path d="M1032 710Q1070 720 1103 744M1176 848L1184 893 1185 928M1134 1044Q1105 1075 1074 1089"/>
          </g>

          <!-- hub -->
          <g stroke="#000" stroke-width="1.3">
            <ellipse cx="982.5" cy="907.5" rx="195.5" ry="200.5" fill="url(#rim2)"/>
            <ellipse cx="982.5" cy="907.5" rx="195.5" ry="200.5" fill="url(#low)"/>
            <ellipse cx="979" cy="908.5" rx="181" ry="185.5" fill="#6b6e80"/>
            <ellipse cx="979.5" cy="908" rx="161.5" ry="166" fill="url(#cone)"/>
            <ellipse cx="979.5" cy="908" rx="161.5" ry="166" fill="url(#high)"/>
            <ellipse cx="982.5" cy="908" rx="146.5" ry="150" fill="url(#bore)"/>
          </g>
        </g>
        <ellipse cx="1025.5" cy="898" rx="146.5" ry="150" clip-path="url(#mouth)" fill="none" stroke="#000" stroke-width="1.4"/>
        <use href="#boltEdge" x="781" y="572"/><use href="#boltEdge" x="1172" y="535"/><use href="#boltEdge" x="1402" y="864"/><use href="#boltEdge" x="1242" y="1230"/><use href="#boltEdge" x="851" y="1267"/><use href="#boltEdge" x="621" y="937"/>
      </svg>
    </section>
  </main>
</div>
<script src="https://cdn.jsdelivr.net/npm/bootstrap@5.3.0/dist/js/bootstrap.bundle.min.js"></script>
</body>
</html>
